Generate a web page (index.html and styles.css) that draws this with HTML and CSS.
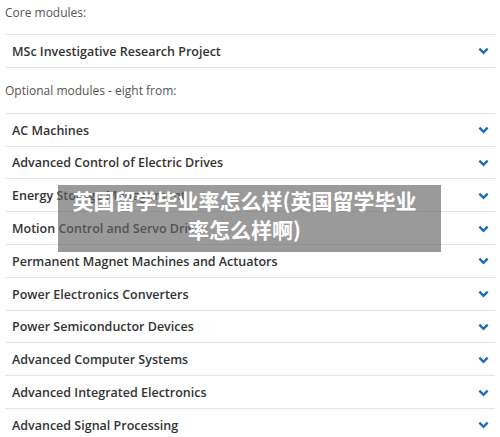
FILE: index.html
```html
<!DOCTYPE html>
<html lang="en">
<head>
  <meta charset="UTF-8">
  <meta name="viewport" content="width=device-width, initial-scale=1.0">
  <title>Course modules</title>
  <link rel="stylesheet" href="styles.css">
</head>
<body>
  <div class="modules">
    <p class="group-label first">Core modules:</p>
    <ul class="module-list">
      <li class="module">MSc Investigative Research Project<svg class="chevron" viewBox="0 0 12 8"><path d="M1.5 1.5 6 6l4.5-4.5"/></svg></li>
    </ul>

    <p class="group-label">Optional modules - eight from:</p>
    <ul class="module-list">
      <li class="module">AC Machines<svg class="chevron" viewBox="0 0 12 8"><path d="M1.5 1.5 6 6l4.5-4.5"/></svg></li>
      <li class="module">Advanced Control of Electric Drives<svg class="chevron" viewBox="0 0 12 8"><path d="M1.5 1.5 6 6l4.5-4.5"/></svg></li>
      <li class="module">Energy Storage Management<svg class="chevron" viewBox="0 0 12 8"><path d="M1.5 1.5 6 6l4.5-4.5"/></svg></li>
      <li class="module">Motion Control and Servo Drives<svg class="chevron" viewBox="0 0 12 8"><path d="M1.5 1.5 6 6l4.5-4.5"/></svg></li>
      <li class="module">Permanent Magnet Machines and Actuators<svg class="chevron" viewBox="0 0 12 8"><path d="M1.5 1.5 6 6l4.5-4.5"/></svg></li>
      <li class="module">Power Electronics Converters<svg class="chevron" viewBox="0 0 12 8"><path d="M1.5 1.5 6 6l4.5-4.5"/></svg></li>
      <li class="module">Power Semiconductor Devices<svg class="chevron" viewBox="0 0 12 8"><path d="M1.5 1.5 6 6l4.5-4.5"/></svg></li>
      <li class="module">Advanced Computer Systems<svg class="chevron" viewBox="0 0 12 8"><path d="M1.5 1.5 6 6l4.5-4.5"/></svg></li>
      <li class="module">Advanced Integrated Electronics<svg class="chevron" viewBox="0 0 12 8"><path d="M1.5 1.5 6 6l4.5-4.5"/></svg></li>
      <li class="module">Advanced Signal Processing<svg class="chevron" viewBox="0 0 12 8"><path d="M1.5 1.5 6 6l4.5-4.5"/></svg></li>
    </ul>
  </div>

  <div class="caption">英国留学毕业率怎么样(英国留学毕业率怎么样啊)</div>
</body>
</html>
```

FILE: styles.css
```css
body {
  margin: 0;
  background-color: #fff;
  font-family: 'Open Sans', 'Noto Sans', sans-serif;
  overflow: hidden;
}

.modules {
  padding: 0 5px;
}

.group-label {
  margin: 0;
  padding: 14px 0 13px;
  font-size: 12px;
  line-height: 18px;
  color: #555;
}

.group-label.first {
  padding: 4px 0 12px;
}

.module-list {
  list-style: none;
  margin: 0;
  padding: 0;
  border-bottom: 1px solid #e3e3e3;
}

.module {
  display: flex;
  align-items: center;
  justify-content: space-between;
  height: 30.8px;
  padding: 1px 6px 0 7px;
  border-top: 1px solid #e3e3e3;
  font-size: 12.5px;
  font-weight: 600;
  color: #333;
  white-space: nowrap;
}

.chevron {
  width: 11px;
  height: 8px;
  fill: none;
  stroke: #1a6bb8;
  stroke-width: 2.6;
}

/* grey title banner laid over the list */
.caption {
  position: absolute;
  left: 58px;
  top: 185px;
  width: 359px;
  height: 58px;
  padding: 1px 17px 8px 7px;
  background-color: rgba(100, 100, 100, 0.65);
  color: #fff;
  font-family: 'Noto Sans CJK SC', sans-serif;
  font-size: 21px;
  font-weight: 700;
  line-height: 29px;
  text-align: center;
}
```
